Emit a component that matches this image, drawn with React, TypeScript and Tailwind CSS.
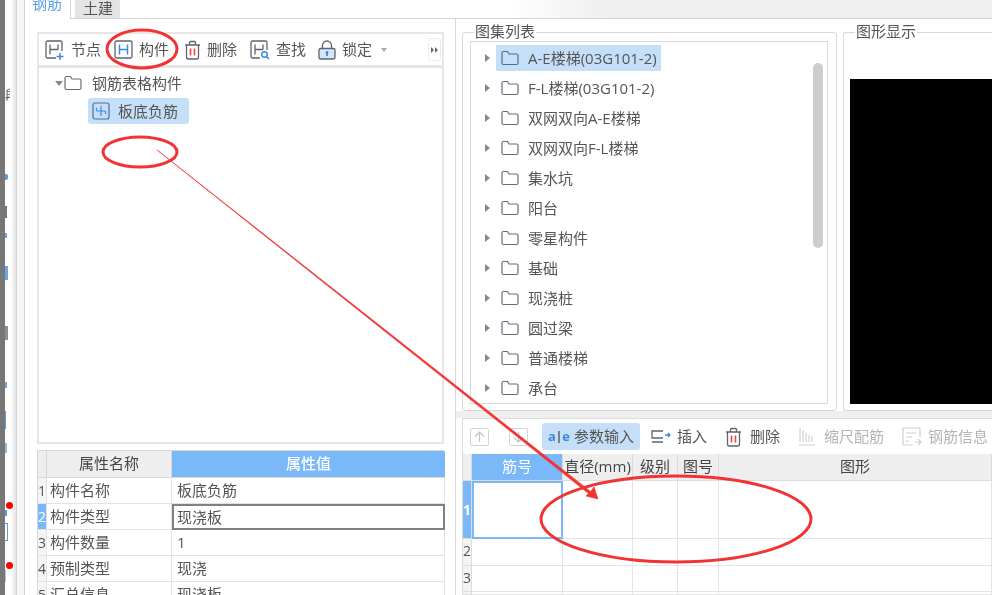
import type { ReactNode } from "react";

const sets = ["A-E楼梯(03G101-2)", "F-L楼梯(03G101-2)", "双网双向A-E楼梯", "双网双向F-L楼梯", "集水坑", "阳台", "零星构件", "基础", "现浇桩", "圆过梁", "普通楼梯", "承台"];

const props = [
  ["1", "构件名称", "板底负筋"],
  ["2", "构件类型", "现浇板"],
  ["3", "构件数量", "1"],
  ["4", "预制类型", "现浇"],
  ["5", "汇总信息", "现浇板"],
];

const Folder = ({ blue = false }: { blue?: boolean }) => (
  <svg width="18" height="16" viewBox="0 0 18 16" fill="none" stroke={blue ? "#4d6f94" : "#666d78"} strokeWidth="1.2">
    <path d="M1 3v10a1.5 1.5 0 0 0 1.5 1.5h13A1.5 1.5 0 0 0 17 13V5.5A1.5 1.5 0 0 0 15.500 4H8L6.500 1.500H2.500A1.500 1.500 0 0 0 1 3Z" />
  </svg>
);

const NodeIcon = () => (
  <svg width="20" height="20" viewBox="0 0 20 20" fill="none" stroke="#5b6470" strokeWidth="1.3">
    <path d="M11 18H2.500A1.500 1.500 0 0 1 1 16.500v-14A1.500 1.500 0 0 1 2.500 1h13A1.500 1.500 0 0 1 17 2.500V11" />
    <path d="M5 4.500v10M5 9.500h8M13 4.500v5" />
    <path d="M15 13v7M11.500 16.500h7" stroke="#3b8ae0" strokeWidth="1.5" />
  </svg>
);

const FindIcon = () => (
  <svg width="20" height="20" viewBox="0 0 20 20" fill="none" stroke="#5b6470" strokeWidth="1.3">
    <path d="M10 18H2.500A1.500 1.500 0 0 1 1 16.500v-14A1.500 1.500 0 0 1 2.500 1h13A1.500 1.500 0 0 1 17 2.500V10" />
    <path d="M5 4.500v10M5 9.500h8M13 4.500v5" />
    <circle cx="14.500" cy="14.500" r="2.800" stroke="#3b8ae0" strokeWidth="1.500" />
    <path d="m16.500 16.500 2.500 2.500" stroke="#3b8ae0" strokeWidth="1.500" />
  </svg>
);

const PartIcon = () => (
  <svg width="19" height="19" viewBox="0 0 19 19" fill="none" stroke="#5b6470" strokeWidth="1.3">
    <rect x="1" y="1" width="17" height="17" rx="1.500" />
    <path d="M5.500 4.500v10M13.500 4.500v10M5.500 9.500h8" stroke="#3b8ae0" strokeWidth="1.500" />
  </svg>
);

const LockIcon = () => (
  <svg width="18" height="20" viewBox="0 0 18 20" fill="none" stroke="#5b6470" strokeWidth="1.3">
    <path d="M4.500 8.500V5.500a4.500 4.500 0 0 1 9 0v3" />
    <rect x="1" y="8.500" width="16" height="10.500" rx="1.500" fill="#d3e5f8" />
    <circle cx="9" cy="12.500" r="1.300" fill="#2f78c8" stroke="none" />
    <path d="M9 13v3" stroke="#2f78c8" strokeWidth="1.500" />
  </svg>
);

const Trash = () => (
  <svg width="17" height="20" viewBox="0 0 17 20" fill="none" stroke="#5b6470" strokeWidth="1.3">
    <path d="M1 5h15M5.500 5V2.500a1 1 0 0 1 1-1h4a1 1 0 0 1 1 1V5M2.500 5v12a2 2 0 0 0 2 2h8a2 2 0 0 0 2-2V5" />
    <path d="M6.500 8.500v7M10.500 8.500v7" stroke="#ee4444" strokeWidth="1.600" />
  </svg>
);

const Tool = ({ icon, label, className = "" }: { icon: ReactNode; label: string; className?: string }) => (
  <div className={`flex items-center gap-[6px] ${className}`}>
    {icon}
    <span className="whitespace-nowrap">{label}</span>
  </div>
);

const Arrow = ({ dir }: { dir: "up" | "down" }) => (
  <div className="flex h-[18px] w-[19px] items-center justify-center rounded-[2px] border border-[#d4d4d4]">
    <svg width="11" height="12" viewBox="0 0 11 12" fill="none" stroke="#c4c4c4" strokeWidth="1.2">
      <path d={dir === "up" ? "M5.5 11V1M1 5.5 5.5 1 10 5.5" : "M5.5 1v10M1 6.5 5.5 11 10 6.5"} />
    </svg>
  </div>
);

const SideBit = ({ className }: { className: string }) => <div className={className} />;

export default function App() {
  return (
    <div className="relative flex h-[595px] w-[992px] overflow-hidden bg-white font-['Open_Sans','Noto_Sans_CJK_SC',sans-serif] text-[15px] text-[#555] blur-[0.5px]">
      {/* clipped window behind */}
      <div className="w-[5px] shrink-0 bg-[#777]" />
      <div className="flex w-[11px] shrink-0 flex-col items-start bg-gradient-to-r from-white from-50% to-[#e4e4e4] pt-[86px]">
        <span className="w-[5px] overflow-hidden text-[13px] leading-[16px] text-[#555]">段</span>
        <SideBit className="mt-[72px] h-[6px] w-[3px] rounded-r-[2px] bg-[#5b9be0]" />
        <SideBit className="mt-[26px] h-[12px] w-[2px] bg-[#777]" />
        <SideBit className="mt-[15px] h-[5px] w-[2px] bg-[#6aa5e4]" />
        <SideBit className="mt-[28px] h-[14px] w-[3px] bg-[#6aa5e4]" />
        <SideBit className="mt-[46px] h-[14px] w-[3px] bg-[#8a8f96]" />
        <SideBit className="mt-[42px] h-[6px] w-[2px] bg-[#6aa5e4]" />
        <SideBit className="mt-[23px] h-[18px] w-[1px] bg-[#5b9be0]" />
        <SideBit className="mt-[14px] h-[10px] w-[2px] bg-[#8db7e6]" />
        <div className="mt-[49px] ml-[1px] h-[7px] w-[7px] rounded-full bg-[#f00]" />
        <SideBit className="mt-[1px] h-[6px] w-[2px] bg-[#5b9be0]" />
        <SideBit className="mt-[7px] h-[18px] w-[3px] border border-l-0 border-[#5b9be0]" />
        <div className="mt-[21px] ml-[1px] h-[7px] w-[7px] rounded-full bg-[#f00]" />
        <SideBit className="mt-[1px] h-[12px] w-[1px] bg-[#a8c6ea]" />
      </div>
      <div className="w-[9px] shrink-0 border-x border-[#d4d4d4] bg-[#f6f6f6]" />

      <div className="flex min-w-0 flex-1 flex-col">
        {/* tabs */}
        <div className="flex h-[19px] shrink-0 border-b border-[#d6d6d6] bg-gradient-to-r from-white from-50% to-[#efefef] to-60%">
          <div className="mb-[-1px] h-[19px] w-[46px] overflow-hidden border-r border-[#d6d6d6] bg-white pl-[7px] text-[#5a9fe6]">
            <div className="mt-[-8px] leading-[22px]">钢筋</div>
          </div>
          <div className="ml-[4px] h-[18px] w-[45px] overflow-hidden bg-[#e4e4e4] pl-[8px] leading-[16px]">土建</div>
        </div>

        <div className="flex min-h-0 flex-1">
          {/* left panel */}
          <div className="flex w-[431px] shrink-0 flex-col border-r border-[#d8d8d8] pt-[13px] pr-[11px] pl-[12px]">
            <div className="flex h-[34px] shrink-0 items-center border-2 border-b-[1px] border-[#e6e6e6] pl-[6px]">
              <Tool icon={<NodeIcon />} label="节点" />
              <Tool icon={<PartIcon />} label="构件" className="ml-[13px]" />
              <Tool icon={<Trash />} label="删除" className="ml-[15px]" />
              <Tool icon={<FindIcon />} label="查找" className="ml-[13px]" />
              <Tool icon={<LockIcon />} label="锁定" className="ml-[12px]" />
              <div className="mt-[1px] ml-[9px] h-0 w-0 border-x-[3px] border-t-[4px] border-x-transparent border-t-[#aaa]" />
              <div className="mr-[1px] ml-auto flex h-[23px] w-[13px] items-center justify-center gap-[1px] rounded-[3px] border border-[#ececec]">
                <div className="h-0 w-0 border-y-[3px] border-l-[3px] border-y-transparent border-l-[#666]" />
                <div className="h-0 w-0 border-y-[3px] border-l-[3px] border-y-transparent border-l-[#666]" />
              </div>
            </div>

            <div className="flex h-[378px] shrink-0 flex-col border-2 border-[#e6e6e6]">
              <div className="flex h-[30px] items-center pl-[16px]">
                <div className="h-0 w-0 border-x-[4px] border-t-[5px] border-x-transparent border-t-[#888]" />
                <span className="ml-[1px] flex"><Folder /></span>
                <span className="ml-[10px]">钢筋表格构件</span>
              </div>
              <div className="ml-[49px] flex h-[26px] w-[101px] items-center rounded-[3px] bg-[#c6dff8] pl-[4px]">
                <svg width="18" height="18" viewBox="0 0 18 18" fill="none" stroke="#4f6f90" strokeWidth="1.2">
                  <rect x="1" y="1" width="16" height="16" rx="2" />
                  <path d="M9 4v10M5 9h8M5 9a2 2 0 0 1 0-3M13 9a2 2 0 0 1 0 3" stroke="#3b8ae0" />
                </svg>
                <span className="ml-[8px]">板底负筋</span>
              </div>
            </div>

            {/* property grid */}
            <div className="mt-[6px] grid flex-1 grid-cols-[9px_125px_273px] grid-rows-[27px_26px_26px_26px_26px_26px] border-t border-l border-[#d8d8d8] leading-[25px]">
              <div className="border-r border-b border-[#d8d8d8] bg-[#eee]" />
              <div className="border-r border-b border-[#d8d8d8] bg-[#eee] text-center text-[#444]">属性名称</div>
              <div className="border-b border-[#d8d8d8] bg-[#7ab8f8] text-center font-medium text-white">属性值</div>
              {props.map(([n, name, value]) => {
                const active = n === "2";
                return (
                  <div key={n} className="contents">
                    <div className={`overflow-hidden border-r border-b border-[#e2e2e2] text-center text-[14px] ${active ? "bg-[#7ab8f8] text-white" : "bg-[#f4f4f4]"}`}>{n}</div>
                    <div className="border-r border-b border-[#e2e2e2] pl-[3px]">{name}</div>
                    <div className={active ? "border-2 border-[#808080] pl-[3px] leading-[22px]" : "border-r border-b border-[#e2e2e2] pl-[5px]"}>{value}</div>
                  </div>
                );
              })}
            </div>
          </div>

          {/* right side */}
          <div className="flex min-w-0 flex-1 flex-col">
            <div className="flex h-[392px] shrink-0 bg-white pt-[13px] pl-[6px]">
              <div className="relative h-[379px] w-[375px] shrink-0 rounded-[3px] border border-[#d8d8d8] pt-[8px] pl-[7px]">
                <div className="absolute top-[-12px] left-[11px] bg-white px-[1px] leading-[20px]">图集列表</div>
                <div className="flex h-[363px] w-[358px] border border-[#d8d8d8] pt-[1px]">
                  <div className="flex flex-1 flex-col overflow-hidden">
                    {sets.map((s, i) => (
                      <div key={s} className="flex h-[30px] shrink-0 items-center pl-[14px]">
                        <div className="h-0 w-0 border-y-[4px] border-l-[5px] border-y-transparent border-l-[#888]" />
                        <div className={`ml-[6px] flex h-[26px] items-center pr-[4px] pl-[5px] ${i === 0 ? "bg-[#c6dff8]" : ""}`}>
                          <Folder blue={i === 0} />
                          <span className="ml-[9px] whitespace-nowrap">{s}</span>
                        </div>
                      </div>
                    ))}
                  </div>
                  <div className="mt-[20px] mr-[4px] h-[185px] w-[10px] rounded-full bg-[#cdcdcd]" />
                </div>
              </div>
              <div className="relative ml-[6px] h-[379px] flex-1 rounded-l-[3px] border border-r-0 border-[#d8d8d8] pt-[46px] pl-[6px]">
                <div className="absolute top-[-12px] left-[11px] bg-white px-[1px] leading-[20px]">图形显示</div>
                <div className="h-[325px] bg-black" />
              </div>
            </div>

            <div className="h-[7px] shrink-0 bg-[#efefef]" />

            <div className="ml-[6px] flex min-h-0 flex-1 flex-col border-t border-l border-[#dcdcdc] bg-white">
              <div className="flex h-[35px] shrink-0 items-center pl-[7px]">
                <Arrow dir="up" />
                <div className="ml-[20px]"><Arrow dir="down" /></div>
                <div className="ml-[14px] flex h-[27px] w-[98px] items-center rounded-[3px] bg-[#c6dff8] pl-[6px]">
                  <span className="text-[13px] font-bold text-[#3b8ae0]">a</span>
                  <span className="mx-[1px] text-[16px] leading-none text-[#555]">I</span>
                  <span className="text-[13px] font-bold text-[#3b8ae0]">e</span>
                  <span className="ml-[4px]">参数输入</span>
                </div>
                <Tool
                  icon={
                    <svg width="20" height="16" viewBox="0 0 20 16" fill="none" stroke="#5b6470" strokeWidth="1.3">
                      <path d="M12 2H1v7h11M1 13h11" />
                      <path d="M14 6h5M17 4l2 2-2 2" stroke="#3b8ae0" />
                    </svg>
                  }
                  label="插入"
                  className="ml-[11px]"
                />
                <Tool icon={<Trash />} label="删除" className="ml-[18px] gap-[8px]" />
                <div className="ml-[18px] flex items-center text-[#b5b5b5]">
                  <svg width="18" height="20" viewBox="0 0 18 20" fill="none" stroke="#cfcfcf" strokeWidth="1.2">
                    <path d="M2 1v14M5 3v12M8 6v9M11 8v7M14 9v6M1 18h16" />
                  </svg>
                  <span className="ml-[8px] whitespace-nowrap">缩尺配筋</span>
                </div>
                <div className="ml-[18px] flex items-center text-[#b5b5b5]">
                  <svg width="20" height="19" viewBox="0 0 20 19" fill="none" stroke="#cfcfcf" strokeWidth="1.2">
                    <path d="M11 18H2a1 1 0 0 1-1-1V2a1 1 0 0 1 1-1h15a1 1 0 0 1 1 1v8M4 6h10M4 10h6M4 14h3M13 15h6M16 12l3 3-3 3" />
                  </svg>
                  <span className="ml-[6px] whitespace-nowrap">钢筋信息</span>
                </div>
              </div>

              {/* rebar grid */}
              <div className="grid flex-1 grid-cols-[9px_91px_70px_45px_41px_1fr] grid-rows-[27px_58px_27px_26px_1fr] leading-[24px]">
                {["", "筋号", "直径(mm)", "级别", "图号", "图形"].map((h, i) => (
                  <div
                    key={h}
                    className={`overflow-hidden border-r border-b border-[#dcdcdc] text-center whitespace-nowrap ${i === 1 ? "bg-[#7ab8f8] text-white" : "bg-[#eee] text-[#444]"}`}
                  >
                    {h}
                  </div>
                ))}
                <div className="flex items-center justify-center overflow-hidden border-r border-b border-[#dcdcdc] bg-[#7ab8f8] text-[14px] font-bold text-white">1</div>
                <div className="border-2 border-[#7ab8f8]" />
                {[0, 1, 2, 3].map((c) => (
                  <div key={c} className="border-r border-b border-[#e4e4e4]" />
                ))}
                {["2", "3", ""].map((n) => (
                  <div key={n} className="contents">
                    <div className="overflow-hidden border-r border-b border-[#dcdcdc] bg-[#f4f4f4] text-center text-[14px]">{n}</div>
                    {[0, 1, 2, 3, 4].map((c) => (
                      <div key={c} className="border-r border-b border-[#e4e4e4]" />
                    ))}
                  </div>
                ))}
              </div>
            </div>
          </div>
        </div>
      </div>

      {/* red annotations drawn on top of the screenshot */}
      <svg className="pointer-events-none absolute inset-0" width="992" height="595" viewBox="0 0 992 595" fill="none">
        <ellipse cx="142" cy="49" rx="35" ry="19" stroke="#f23333" strokeWidth="3" />
        <ellipse cx="140" cy="152" rx="37" ry="15" stroke="#f23333" strokeWidth="3" />
        <ellipse cx="676" cy="519" rx="135" ry="43" stroke="#f23333" strokeWidth="3" />
        <path d="M157 150 L590.500 491.500 L594 487 L598 499 L586 496 L588.500 493.500 Z" fill="#f23333" stroke="#f23333" strokeWidth="0.6" />
      </svg>
    </div>
  );
}
